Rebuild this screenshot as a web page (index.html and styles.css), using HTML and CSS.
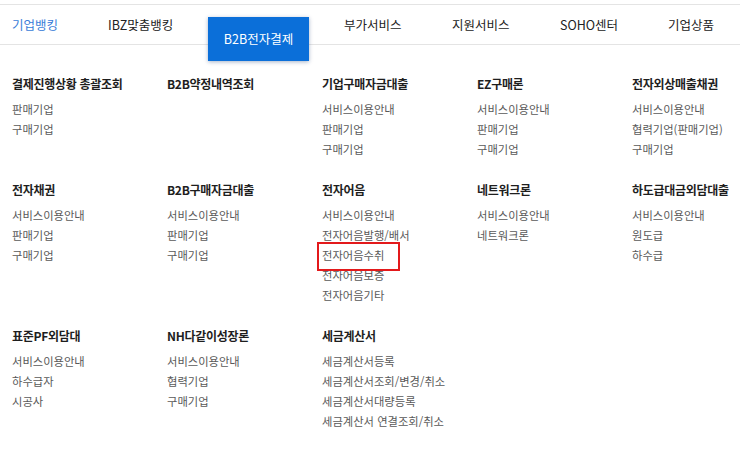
FILE: index.html
```html
<!DOCTYPE html>
<html lang="ko">
<head>
<meta charset="utf-8">
<title>B2B전자결제</title>
<link rel="stylesheet" href="styles.css">
</head>
<body>
<nav class="gnb">
  <a class="gnb-item w96 current">기업뱅킹</a>
  <a class="gnb-item w100">IBZ맞춤뱅킹</a>
  <a class="gnb-tab">B2B전자결제</a>
  <a class="gnb-item w108">부가서비스</a>
  <a class="gnb-item w108">지원서비스</a>
  <a class="gnb-item w108">SOHO센터</a>
  <a class="gnb-item">기업상품</a>
</nav>

<main class="menu">
  <div class="menu-row">
    <section class="col">
      <h3 class="col-title">결제진행상황 총괄조회</h3>
      <ul class="col-list"><li>판매기업</li><li>구매기업</li></ul>
    </section>
    <section class="col">
      <h3 class="col-title">B2B약정내역조회</h3>
      <ul class="col-list"></ul>
    </section>
    <section class="col">
      <h3 class="col-title">기업구매자금대출</h3>
      <ul class="col-list"><li>서비스이용안내</li><li>판매기업</li><li>구매기업</li></ul>
    </section>
    <section class="col">
      <h3 class="col-title">EZ구매론</h3>
      <ul class="col-list"><li>서비스이용안내</li><li>판매기업</li><li>구매기업</li></ul>
    </section>
    <section class="col">
      <h3 class="col-title">전자외상매출채권</h3>
      <ul class="col-list"><li>서비스이용안내</li><li>협력기업(판매기업)</li><li>구매기업</li></ul>
    </section>
  </div>

  <div class="menu-row">
    <section class="col">
      <h3 class="col-title">전자채권</h3>
      <ul class="col-list"><li>서비스이용안내</li><li>판매기업</li><li>구매기업</li></ul>
    </section>
    <section class="col">
      <h3 class="col-title">B2B구매자금대출</h3>
      <ul class="col-list"><li>서비스이용안내</li><li>판매기업</li><li>구매기업</li></ul>
    </section>
    <section class="col">
      <h3 class="col-title">전자어음</h3>
      <ul class="col-list"><li>서비스이용안내</li><li>전자어음발행/배서</li><li class="marked">전자어음수취</li><li>전자어음보증</li><li>전자어음기타</li></ul>
    </section>
    <section class="col">
      <h3 class="col-title">네트워크론</h3>
      <ul class="col-list"><li>서비스이용안내</li><li>네트워크론</li></ul>
    </section>
    <section class="col">
      <h3 class="col-title">하도급대금외담대출</h3>
      <ul class="col-list"><li>서비스이용안내</li><li>원도급</li><li>하수급</li></ul>
    </section>
  </div>

  <div class="menu-row">
    <section class="col">
      <h3 class="col-title">표준PF외담대</h3>
      <ul class="col-list"><li>서비스이용안내</li><li>하수급자</li><li>시공사</li></ul>
    </section>
    <section class="col">
      <h3 class="col-title">NH다같이성장론</h3>
      <ul class="col-list"><li>서비스이용안내</li><li>협력기업</li><li>구매기업</li></ul>
    </section>
    <section class="col">
      <h3 class="col-title">세금계산서</h3>
      <ul class="col-list"><li>세금계산서등록</li><li>세금계산서조회/변경/취소</li><li>세금계산서대량등록</li><li>세금계산서 연결조회/취소</li></ul>
    </section>
  </div>
</main>
</body>
</html>
```

FILE: styles.css
```css
* { box-sizing: border-box; }

html, body {
  margin: 0;
  padding: 0;
  background: #ffffff;
}

body {
  font-family: "Noto Sans CJK KR", "Noto Sans", sans-serif;
  color: #333333;
  overflow: hidden;
}

.gnb {
  margin-top: 4px;
  height: 41px;
  border-top: 1px solid #e4e4e4;
  border-bottom: 1px solid #e4e4e4;
  display: flex;
  align-items: flex-start;
  padding-left: 12px;
}

.gnb-item {
  display: block;
  height: 39px;
  line-height: 39px;
  font-size: 12.5px;
  color: #222222;
  white-space: nowrap;
}

.gnb-item.current { color: #3a7dd8; }

.w96 { width: 96px; }
.w100 { width: 100px; }
.w108 { width: 108px; }

.gnb-tab {
  display: block;
  flex: none;
  width: 101px;
  height: 44px;
  margin-top: 12px;
  margin-right: 35px;
  line-height: 44px;
  text-align: center;
  font-size: 12.5px;
  color: #ffffff;
  background: #0b6fd9;
  box-shadow: 0 1px 4px rgba(0, 40, 100, 0.35);
  position: relative;
  z-index: 2;
}

.menu {
  padding: 29px 0 0 12px;
}

.menu-row {
  display: grid;
  grid-template-columns: repeat(4, 155px) minmax(0, 1fr);
  margin-bottom: 21px;
}

.col-title {
  margin: 0 0 5px;
  font-size: 12px;
  line-height: 20px;
  font-weight: 700;
  letter-spacing: -0.3px;
  color: #1e1e1e;
  white-space: nowrap;
}

.col-list {
  list-style: none;
  margin: 0;
  padding: 0;
}

.col-list li {
  font-size: 11.3px;
  line-height: 20px;
  color: #595959;
  white-space: nowrap;
}

.col-list li.marked {
  position: relative;
}

.col-list li.marked::after {
  content: "";
  position: absolute;
  left: -5px;
  top: -3px;
  width: 79px;
  height: 25px;
  border: 2px solid #e3191b;
}
```
